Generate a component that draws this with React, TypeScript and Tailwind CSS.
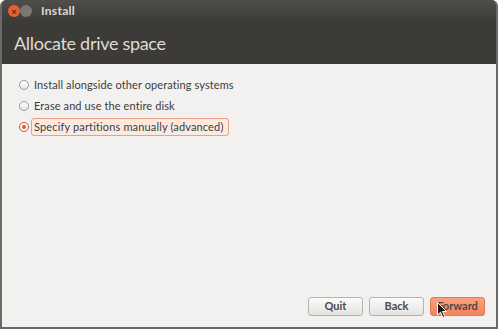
import React from 'react'

const options = [
  'Install alongside other operating systems',
  'Erase and use the entire disk',
  'Specify partitions manually (advanced)',
]

function Radio({ checked }: { checked: boolean }) {
  return (
    <span
      className={
        checked
          ? 'flex h-[10px] w-[10px] items-center justify-center rounded-full border border-[#c8542a] bg-[#f8f8f8]'
          : 'flex h-[10px] w-[10px] items-center justify-center rounded-full border border-[#9c9a97] bg-gradient-to-b from-[#ffffff] to-[#e8e7e5]'
      }
    >
      {checked && <span className="h-[4px] w-[4px] rounded-full bg-[#e0582a]" />}
    </span>
  )
}

function Cursor() {
  return (
    <svg className="absolute left-[6px] top-[4px]" width="11" height="17" viewBox="0 0 11 17">
      <path d="M0.5 0.5 L0.5 13 L3.5 10.2 L5.8 15.5 L7.8 14.6 L5.5 9.5 L9.5 9.5 Z" fill="#1a1a1a" stroke="#ffffff" strokeWidth="1" />
    </svg>
  )
}

export default function App() {
  const selected = 2

  return (
    <div
      className="flex h-[329px] w-[500px] bg-[#ffffff]"
      style={{ fontFamily: 'Lato, "Open Sans", sans-serif' }}
    >
      <div className="flex h-full w-[498px] flex-col overflow-hidden rounded-t-[6px] border-x-2 border-b-2 border-[#6b6a67] bg-[#f2f1f0]">
        <div className="h-[64px] bg-[#3c3b37]">
          <div className="flex h-[21px] items-center pl-[6px] bg-gradient-to-b from-[#4f4e4a] to-[#3c3b37]">
            <span className="flex h-[12px] w-[12px] items-center justify-center rounded-full bg-[#e9602f] text-[10px] font-bold leading-none text-[#4a2a1c]">
              ×
            </span>
            <span className="h-[12px] w-[12px] rounded-full bg-[#7a7873]" />
            <span className="ml-[9px] text-[12px] font-bold tracking-[0.3px] text-[#dfdbd2]">Install</span>
          </div>
          <div className="pl-[12px] pt-[9px] text-[18px] leading-[26px] tracking-[-0.3px] text-[#dfdbd2]">
            Allocate drive space
          </div>
        </div>
        <div className="flex flex-1 flex-col justify-between pb-[11px] pl-[17px] pr-[11px] pt-[12px]">
          <div className="flex flex-col gap-[3px]">
            {options.map((label, i) => (
              <div key={label} className="flex items-center gap-[2px]">
                <Radio checked={i === selected} />
                <span
                  className={
                    i === selected
                      ? 'rounded-[3px] border border-[#ef9f80] bg-[#fbeae2] pl-[2px] pr-[5px] text-[11px] leading-[16px] tracking-[0.15px] text-[#3c3c3c]'
                      : 'border border-transparent px-[2px] text-[11px] leading-[16px] tracking-[0.1px] text-[#3c3c3c]'
                  }
                >
                  {label}
                </span>
              </div>
            ))}
          </div>
          <div className="flex justify-end gap-[6px]">
            <button className="h-[19px] w-[55px] rounded-[3px] border border-[#b4b2ae] bg-gradient-to-b from-[#fbfbfa] to-[#e4e3e1] text-[11px] font-bold text-[#4a4a4a]">
              Quit
            </button>
            <button className="h-[19px] w-[55px] rounded-[3px] border border-[#b4b2ae] bg-gradient-to-b from-[#fbfbfa] to-[#e4e3e1] text-[11px] font-bold text-[#4a4a4a]">
              Back
            </button>
            <button className="relative h-[19px] w-[55px] rounded-[3px] border border-[#e07a55] bg-gradient-to-b from-[#fba17f] to-[#f2825b] text-[11px] font-bold text-[#4a4a4a]">
              Forward
              <Cursor />
            </button>
          </div>
        </div>
      </div>
    </div>
  )
}
